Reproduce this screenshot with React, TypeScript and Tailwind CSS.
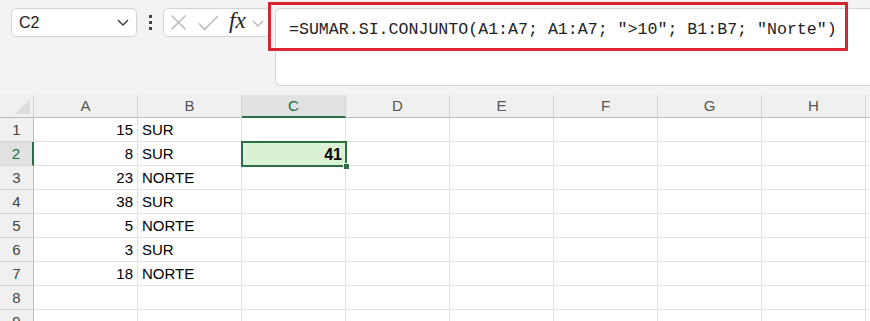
import React from 'react';

const cols = ['A', 'B', 'C', 'D', 'E', 'F', 'G', 'H'];

const rows: { n: number; a: string; b: string }[] = [
  { n: 1, a: '15', b: 'SUR' },
  { n: 2, a: '8', b: 'SUR' },
  { n: 3, a: '23', b: 'NORTE' },
  { n: 4, a: '38', b: 'SUR' },
  { n: 5, a: '5', b: 'NORTE' },
  { n: 6, a: '3', b: 'SUR' },
  { n: 7, a: '18', b: 'NORTE' },
  { n: 8, a: '', b: '' },
  { n: 9, a: '', b: '' },
];

function Chevron({ color }: { color: string }) {
  return (
    <svg width="12" height="7" viewBox="0 0 12 7" fill="none">
      <path d="M1 1l5 5 5-5" stroke={color} strokeWidth="1.3" />
    </svg>
  );
}

function TopBar() {
  return (
    <div className="flex items-start pt-[8px] h-[86px]">
      {/* name box */}
      <div className="ml-[11px] w-[126px] h-[29px] bg-white border border-[#d4d4d4] rounded-[5px] flex items-center justify-between pl-[7px] pr-[7px]">
        <span className="text-[16px] text-[#222]">C2</span>
        <Chevron color="#333" />
      </div>

      {/* more dots */}
      <div className="w-[26px] h-[29px] flex flex-col items-center justify-center gap-[3px]">
        <div className="w-[3px] h-[3px] bg-[#444]" />
        <div className="w-[3px] h-[3px] bg-[#444]" />
        <div className="w-[3px] h-[3px] bg-[#444]" />
      </div>

      {/* cancel / enter / fx */}
      <div className="w-[107px] h-[29px] bg-white border border-[#d4d4d4] rounded-[5px] flex items-center pl-[6px]">
        <svg width="17" height="17" viewBox="0 0 17 17" fill="none">
          <path d="M1.5 1.5l14 14M15.5 1.5l-14 14" stroke="#b4b4b4" strokeWidth="1.3" />
        </svg>
        <svg className="ml-[11px]" width="21" height="16" viewBox="0 0 21 16" fill="none">
          <path d="M1 8.5l5.5 6L20 1" stroke="#b4b4b4" strokeWidth="1.3" />
        </svg>
        <span className="ml-[10px] font-['Liberation_Serif',serif] italic text-[23px] leading-none text-[#222] -mt-[4px]">
          fx
        </span>
        <span className="ml-[6px] mt-[1px]">
          <Chevron color="#b4b4b4" />
        </span>
      </div>

      {/* formula input */}
      <div className="ml-[5px] flex-1 h-[78px] bg-white border border-r-0 border-[#d4d4d4] rounded-l-[6px] pl-[13px] pt-[8px]">
        <span className="font-['Liberation_Mono',monospace] text-[16.6px] leading-[20px] text-[#222] whitespace-pre">
          =SUMAR.SI.CONJUNTO(A1:A7; A1:A7; "&gt;10"; B1:B7; "Norte")
        </span>
      </div>
    </div>
  );
}

function Grid() {
  return (
    <div className="flex flex-col">
      {/* column headers */}
      <div className="flex h-[23px]">
        <div className="w-[34px] shrink-0 border-r border-b border-r-[#d4d4d4] border-b-[#bdbdbd] bg-[#f0f0f0] relative">
          <svg className="absolute right-[3px] bottom-[3px]" width="15" height="15" viewBox="0 0 15 15">
            <path d="M15 0V15H0Z" fill="#dcdcdc" />
          </svg>
        </div>
        {cols.map((c) =>
          c === 'C' ? (
            <div
              key={c}
              className="w-[104px] shrink-0 border-r border-r-[#d4d4d4] border-b-2 border-b-[#2b6e45] bg-[#e1e1e1] text-center text-[15px] leading-[21px] text-[#1f6b3f]"
            >
              {c}
            </div>
          ) : (
            <div
              key={c}
              className="w-[104px] shrink-0 border-r border-b border-r-[#d4d4d4] border-b-[#bdbdbd] bg-[#f0f0f0] text-center text-[15px] leading-[22px] text-[#555]"
            >
              {c}
            </div>
          )
        )}
        <div className="flex-1 border-b border-b-[#bdbdbd] bg-[#f0f0f0]" />
      </div>

      {rows.map((r) => {
        const sel = r.n === 2;
        return (
          <div key={r.n} className="flex h-[24px] shrink-0">
            <div
              className={
                sel
                  ? 'w-[34px] shrink-0 border-r-2 border-r-[#2b6e45] border-b border-b-[#d4d4d4] bg-[#e1e1e1] text-center text-[15px] leading-[23px] text-[#1f6b3f]'
                  : 'w-[34px] shrink-0 border-r border-r-[#bdbdbd] border-b border-b-[#d4d4d4] bg-[#f0f0f0] text-center text-[15px] leading-[23px] text-[#444]'
              }
            >
              {r.n}
            </div>
            <div className="w-[104px] shrink-0 border-r border-b border-[#e1e1e1] bg-white text-right pr-[4px] text-[15px] leading-[24px] text-black">
              {r.a}
            </div>
            <div className="w-[104px] shrink-0 border-r border-b border-[#e1e1e1] bg-white pl-[4px] text-[15px] leading-[24px] text-black">
              {r.b}
            </div>
            <div className="w-[104px] shrink-0 border-r border-b border-[#e1e1e1] bg-white relative">
              {sel && (
                <div className="absolute z-10 -left-px -top-px w-[106px] h-[26px] border-2 border-[#2b6e45] bg-[#d9f2d4] text-right pr-[3px] font-bold text-[16px] leading-[23px] text-black">
                  41
                  <div className="absolute -right-[5px] -bottom-[5px] w-[7px] h-[7px] bg-[#2b6e45] border border-white" />
                </div>
              )}
            </div>
            {cols.slice(3).map((c) => (
              <div key={c} className="w-[104px] shrink-0 border-r border-b border-[#e1e1e1] bg-white" />
            ))}
            <div className="flex-1 border-b border-[#e1e1e1] bg-white" />
          </div>
        );
      })}
    </div>
  );
}

export default function App() {
  return (
    <div className="w-[870px] h-[321px] overflow-hidden bg-[#f3f3f3] font-['Liberation_Sans',sans-serif] relative">
      <TopBar />
      <div className="h-[9px]" />
      <Grid />
      {/* highlight around the formula */}
      <div className="absolute left-[268px] top-[2px] w-[580px] h-[49px] border-[3px] border-[#d7262f] pointer-events-none" />
    </div>
  );
}
